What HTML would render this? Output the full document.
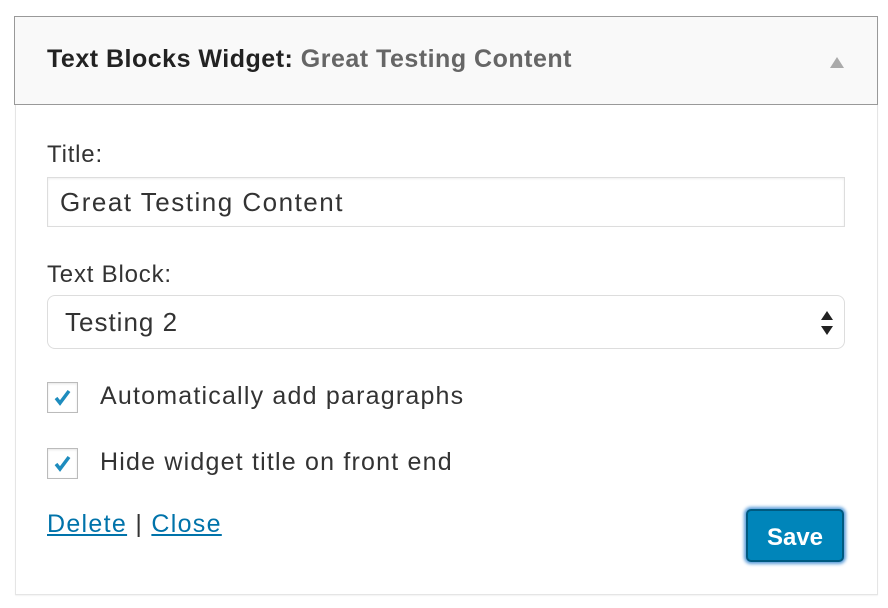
<!DOCTYPE html>
<html><head><style>
body{margin:0;background:#fff;width:888px;height:608px;position:relative;font-family:"Liberation Sans",sans-serif;color:#333;overflow:hidden}
.box{position:absolute;left:15px;top:16px;width:861px;height:578px;border:1px solid #e5e5e5;border-top:none;box-shadow:0 1px 1px rgba(0,0,0,.05)}
.head{position:absolute;left:14px;top:16px;width:862px;height:87px;background:#f9f9f9;border:1px solid #999}
.head .t{position:absolute;left:32px;top:28px;font-size:25px;font-weight:bold;color:#222;letter-spacing:0.5px}
.head .t span{color:#666}
.tri{position:absolute;right:33px;top:40px;width:0;height:0;border-left:7px solid transparent;border-right:7px solid transparent;border-bottom:11px solid #aaa}
.lbl{position:absolute;left:47px;font-size:24px;color:#333;letter-spacing:0.8px}
.input{position:absolute;left:47px;top:177px;width:796px;height:48px;border:1px solid #ddd;box-shadow:inset 0 1px 2px rgba(0,0,0,.07);font-size:26px;line-height:48px;text-indent:12px;color:#333;letter-spacing:1.5px}
.select{position:absolute;left:47px;top:295px;width:796px;height:52px;border:1px solid #ddd;border-radius:8px;font-size:26px;line-height:52px;text-indent:17px;letter-spacing:1px}
.cb{position:absolute;left:47px;width:29px;height:29px;border:1px solid #bbb;box-shadow:inset 0 1px 2px rgba(0,0,0,.1)}
.cl{position:absolute;left:100px;font-size:25px;letter-spacing:1.2px}
a{color:#0073aa;text-decoration:underline}
.links{position:absolute;left:47px;top:510px;font-size:25px;letter-spacing:1.3px}
.save{position:absolute;left:746px;top:509px;width:98px;height:53px;background:#0085ba;border:2px solid #005a80;border-radius:5px;box-shadow:0 0 3px 2px #5b9dd9;color:#fff;font-size:24px;font-weight:bold;text-align:center;line-height:53px;box-sizing:border-box}
</style></head><body>
<div class="box"></div>
<div class="head"><div class="t">Text Blocks Widget: <span>Great Testing Content</span></div><div class="tri"></div></div>
<div class="lbl" style="top:141px">Title:</div>
<div class="input">Great Testing Content</div>
<div class="lbl" style="top:261px">Text Block:</div>
<div class="select">Testing 2
<svg style="position:absolute;right:10px;top:14px" width="14" height="26" viewBox="0 0 14 26"><path d="M7 1L13 10H1z M7 25L13 16H1z" fill="#222"/></svg></div>
<div class="cb" style="top:382px"><svg width="29" height="29" viewBox="0 0 29 29"><path d="M8 15l4 5 9-12" stroke="#1e8cbe" stroke-width="3.5" fill="none"/></svg></div>
<div class="cl" style="top:382px">Automatically add paragraphs</div>
<div class="cb" style="top:448px"><svg width="29" height="29" viewBox="0 0 29 29"><path d="M8 15l4 5 9-12" stroke="#1e8cbe" stroke-width="3.5" fill="none"/></svg></div>
<div class="cl" style="top:448px">Hide widget title on front end</div>
<div class="links"><a>Delete</a> | <a>Close</a></div>
<div class="save">Save</div>
</body></html>
